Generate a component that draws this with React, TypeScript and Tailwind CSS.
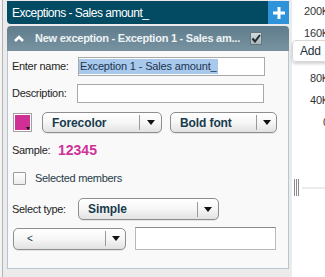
import React from "react";

const F = { fontFamily: '"Liberation Sans", Arial, sans-serif' } as const;

function Arrow() {
  return (
    <svg width="8" height="5" viewBox="0 0 8 5" className="block">
      <polygon points="0,0 8,0 4,5" fill="#111" />
    </svg>
  );
}

function Dropdown({ label, w, sep, bold = true, pl = "pl-[9px]" }: { label: string; w: string; sep: string; bold?: boolean; pl?: string }) {
  return (
    <div
      className={`${w} h-full flex items-center rounded-[5px] border border-[#8e8e8e] bg-gradient-to-b from-white via-[#f6f6f6] to-[#e2e2e2] shadow-[0_1px_0_rgba(0,0,0,0.08)]`}
    >
      <div className={`flex-1 ${pl} ${bold ? "text-[12px] font-bold" : "text-[10px]"} text-[#173b4d] tracking-[-0.1px] leading-none`}>{label}</div>
      <div className={`${sep} h-[15px] border-l border-[#9a9a9a] flex items-center justify-center`}>
        <Arrow />
      </div>
    </div>
  );
}

export default function App() {
  return (
    <div className="w-[325px] h-[277px] bg-white flex overflow-hidden relative" style={F}>
      {/* Left panel area */}
      <div className="w-[292px] shrink-0 h-full flex">
        <div className="w-[2px] bg-[#f3f3f3]" />
        <div className="flex-1 border-l border-[#b4b4b4] bg-[#ebebeb] pl-[4px] pr-[3px] pt-[1px] flex flex-col">
          {/* Header 1 */}
          <div className="flex h-[23px]">
            <div className="flex-1 bg-[#034a63] rounded-bl-[4px] flex items-center pl-[5px] text-white text-[12px] tracking-[-0.5px]">
              Exceptions - Sales amount_
            </div>
            <div className="w-[21px] bg-[#2f93dc] flex items-center justify-center">
              <svg width="12" height="12" viewBox="0 0 12 12">
                <rect x="4.5" y="0" width="3" height="12" fill="white" />
                <rect x="0" y="4.5" width="12" height="3" fill="white" />
              </svg>
            </div>
          </div>
          {/* Header 2 */}
          <div className="mt-[2px] h-[25px] rounded-t-[4px] bg-gradient-to-b from-[#5f7d8d] to-[#7892a0] flex items-center pl-[7px] pr-[27px]">
            <svg width="10" height="7" viewBox="0 0 10 7" className="block shrink-0">
              <polyline points="1,6 5,2 9,6" fill="none" stroke="white" strokeWidth="2.6" />
            </svg>
            <div className="ml-[11px] text-[11px] font-bold text-[#eef3f5] tracking-[-0.25px] whitespace-nowrap">
              New exception - Exception 1 - Sales am...
            </div>
            <div className="ml-auto w-[12px] h-[13px] border border-[#66767e] bg-gradient-to-b from-[#d4d9dc] to-[#aab4b9] flex items-center justify-center shrink-0">
              <svg width="10" height="9" viewBox="0 0 10 9">
                <polyline points="1.5,4.5 4,7.5 9,1" fill="none" stroke="#1f2a30" strokeWidth="2" />
              </svg>
            </div>
          </div>
          {/* Body */}
          <div className="h-[218px] border border-t-0 border-[#b6c7d3] bg-[#f9f9f9] pl-[4px] pt-[6px] flex flex-col text-[11px] text-[#1e1e1e] tracking-[-0.3px]">
            <div className="flex items-center h-[19px]">
              <div className="w-[66px]">Enter name:</div>
              <div className="w-[187px] h-full border border-[#a9a9a9] bg-white flex items-center">
                <span className="bg-[#a9c9ec] text-[#1b3550] text-[11px] leading-[15px] tracking-[-0.15px] px-[1px]">Exception 1 - Sales amount_</span>
              </div>
            </div>
            <div className="flex items-center h-[19px] mt-[8px]">
              <div className="w-[65px]">Description:</div>
              <div className="w-[187px] h-full border border-[#a9a9a9] bg-white" />
            </div>
            <div className="flex items-center h-[21px] mt-[9px]">
              <div className="ml-[1px] w-[19px] h-[19px] border border-[#a0a0a0] p-[1px] bg-white relative">
                <div className="w-full h-full bg-[#d02f93]" />
                <svg width="4" height="3" viewBox="0 0 4 3" className="absolute right-[1px] bottom-[1px]">
                  <polygon points="0,0 4,0 2,3" fill="#111" />
                </svg>
              </div>
              <div className="ml-[10px] h-full flex">
                <Dropdown label="Forecolor" w="w-[120px]" sep="w-[22px]" />
              </div>
              <div className="ml-[8px] h-full flex">
                <Dropdown label="Bold font" w="w-[107px]" sep="w-[20px]" />
              </div>
            </div>
            <div className="flex items-center h-[18px] mt-[8px]">
              <div className="w-[46px]">Sample:</div>
              <div className="text-[14px] font-bold text-[#cc3399] tracking-[0px]">12345</div>
            </div>
            <div className="flex items-center h-[13px] mt-[13px]">
              <div className="ml-[1px] w-[13px] h-[13px] border border-[#9c9c9c] rounded-[1px] bg-gradient-to-b from-white to-[#ececec]" />
              <div className="ml-[9px] text-[#263c48]">Selected members</div>
            </div>
            <div className="flex items-center h-[22px] mt-[13px]">
              <div className="w-[66px]">Select type:</div>
              <div className="h-full flex">
                <Dropdown label="Simple" w="w-[141px]" sep="w-[21px]" />
              </div>
            </div>
            <div className="flex items-center h-[23px] mt-[7px]">
              <div className="ml-[1px] h-[22px] flex">
                <Dropdown label="<" w="w-[113px]" sep="w-[20px]" bold={false} pl="pl-[13px]" />
              </div>
              <div className="ml-[9px] w-[141px] h-[23px] border border-[#b9b9b9] border-t-[#8a8a8a] bg-white" />
            </div>
          </div>
        </div>
      </div>
      {/* Right chart axis */}
      <div className="w-[40px] shrink-0 h-full relative text-[11px] text-[#333] tracking-[-0.2px]">
        <div className="pr-[3px] pt-[4px] flex flex-col items-end leading-[14px]">
          <div className="h-[22px]">200K</div>
          <div className="h-[22px]">160K</div>
          <div className="h-[23px] text-[#c8c8c8]">120K</div>
          <div className="h-[22px]">80K</div>
          <div className="h-[22px]">40K</div>
          <div className="h-[22px]">0</div>
        </div>
        <div className="mt-[42px] flex items-center pl-[2px]">
          <div className="flex gap-[1px] h-[17px]">
            <div className="w-[1px] h-full bg-[#8a8a8a]" />
            <div className="w-[1px] h-full bg-[#8a8a8a]" />
            <div className="w-[1px] h-full bg-[#8a8a8a]" />
          </div>
          <div className="ml-[3px] flex-1 h-[2px] bg-[#ececec]" />
        </div>
        {/* Tooltip */}
        <div className="absolute left-0 top-[40px] w-[45px] h-[22px] bg-white/90 border border-[#d8d8d8] rounded-[4px] shadow-[0_2px_3px_rgba(0,0,0,0.18)] pl-[7px] flex items-center text-[12px] text-[#1d3340]">
          Add
        </div>
      </div>
    </div>
  );
}
